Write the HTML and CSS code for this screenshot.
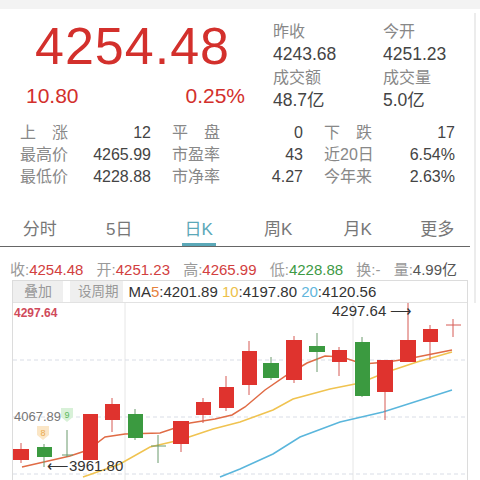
FILE: index.html
```html
<!DOCTYPE html>
<html lang="zh-CN">
<head>
    <meta charset="UTF-8">
    <meta name="viewport" content="width=device-width, initial-scale=1.0">
    <title>上证指数</title>
    <link rel="stylesheet" href="styles.css">
</head>
<body>
    <div class="screen">
        <div class="topbar"></div>
        <div class="edge"></div>

        <!-- quote header -->
        <div class="quote">
            <div class="price-box">
                <div class="price">4254.48</div>
                <div class="change">
                    <span>10.80</span>
                    <span>0.25%</span>
                </div>
            </div>
            <div class="brief">
                <div class="brief-item"><div class="lbl">昨收</div><div class="val">4243.68</div></div>
                <div class="brief-item"><div class="lbl">今开</div><div class="val">4251.23</div></div>
                <div class="brief-item"><div class="lbl">成交额</div><div class="val">48.7亿</div></div>
                <div class="brief-item"><div class="lbl">成交量</div><div class="val">5.0亿</div></div>
            </div>
        </div>

        <!-- stats -->
        <div class="stats">
            <div class="stat"><span>上　涨</span><b>12</b></div>
            <div class="stat"><span>平　盘</span><b>0</b></div>
            <div class="stat"><span>下　跌</span><b>17</b></div>
            <div class="stat"><span>最高价</span><b>4265.99</b></div>
            <div class="stat"><span>市盈率</span><b>43</b></div>
            <div class="stat"><span>近20日</span><b>6.54%</b></div>
            <div class="stat"><span>最低价</span><b>4228.88</b></div>
            <div class="stat"><span>市净率</span><b>4.27</b></div>
            <div class="stat"><span>今年来</span><b>2.63%</b></div>
        </div>

        <!-- tabs -->
        <div class="tabs">
            <div class="tab">分时</div>
            <div class="tab">5日</div>
            <div class="tab active">日K</div>
            <div class="tab">周K</div>
            <div class="tab">月K</div>
            <div class="tab">更多</div>
        </div>

        <div class="ohlc">
            <span>收:<em class="up">4254.48</em></span>
            <span>开:<em class="up">4251.23</em></span>
            <span>高:<em class="up">4265.99</em></span>
            <span>低:<em class="down">4228.88</em></span>
            <span>换:-</span>
            <span>量:<em>4.99亿</em></span>
        </div>

        <!-- k-line chart -->
        <div class="chart">
            <div class="chart-head">
                <span class="btn">叠加</span>
                <span class="btn btn-period">设周期</span>
                <span class="ma">MA<i class="c5">5</i>:4201.89 <i class="c10">10</i>:4197.80 <i class="c20">20</i>:4120.56</span>
            </div>
            <svg class="plot" width="454" height="180" viewBox="13 306 454 180">
                <g class="grid">
                    <line x1="125" y1="306" x2="125" y2="490"/>
                    <line x1="353" y1="306" x2="353" y2="490"/>
                    <line class="dash" x1="13" y1="363" x2="467" y2="363"/>
                    <line class="dash" x1="13" y1="420" x2="467" y2="420"/>
                    <line class="dash" x1="13" y1="477" x2="467" y2="477"/>
                </g>

                <polyline class="ma20" points="220,480 240,472 273,457 300,440 340,425 383,415 452,393"/>
                <polyline class="ma10" points="83,480 120,467 150,450 180,443 213,432 240,425 273,413 293,402 330,392 360,386 387,375 417,365 452,355"/>
                <polyline class="ma5" points="22,470 70,459 88,453 105,440 125,437 160,436 190,426 215,422 232,418 245,410 265,393 287,378 307,366 325,359 342,360 363,367 387,365 407,362 452,353"/>

                <g class="up">
                    <line x1="21" y1="446" x2="21" y2="466"/><rect x="13" y="452" width="16" height="11"/>
                    <line x1="90" y1="417" x2="90" y2="463"/><rect x="83" y="417" width="15" height="46"/>
                    <line x1="112" y1="401" x2="112" y2="435"/><rect x="105" y="407" width="15" height="16"/>
                    <line x1="181" y1="424" x2="181" y2="455"/><rect x="173" y="424" width="16" height="23"/>
                    <line x1="203" y1="401" x2="203" y2="426"/><rect x="196" y="405" width="15" height="13"/>
                    <line x1="226" y1="379" x2="226" y2="414"/><rect x="219" y="390" width="15" height="21"/>
                    <line x1="249" y1="344" x2="249" y2="398"/><rect x="242" y="354" width="15" height="34"/>
                    <line x1="294" y1="339" x2="294" y2="386"/><rect x="286" y="343" width="16" height="40"/>
                    <line x1="339" y1="350" x2="339" y2="379"/><rect x="332" y="353" width="15" height="12"/>
                    <line x1="385" y1="363" x2="385" y2="423"/><rect x="377" y="363" width="16" height="32"/>
                    <line x1="408" y1="306" x2="408" y2="365"/><rect x="400" y="343" width="16" height="22"/>
                    <line x1="430" y1="328" x2="430" y2="363"/><rect x="423" y="332" width="15" height="13"/>
                    <line x1="453" y1="322" x2="453" y2="340"/><line x1="446" y1="328" x2="461" y2="328"/>
                </g>
                <g class="down">
                    <line x1="44" y1="447" x2="44" y2="470"/><rect x="37" y="450" width="15" height="10"/>
                    <line x1="67" y1="433" x2="67" y2="460"/><line x1="62" y1="458" x2="73" y2="458"/>
                    <line x1="135" y1="412" x2="135" y2="443"/><rect x="128" y="417" width="15" height="24"/>
                    <line x1="158" y1="438" x2="158" y2="466"/><line x1="151" y1="449" x2="166" y2="449"/>
                    <line x1="271" y1="360" x2="271" y2="383"/><rect x="263" y="366" width="16" height="15"/>
                    <line x1="317" y1="336" x2="317" y2="375"/><rect x="309" y="349" width="16" height="6"/>
                    <line x1="362" y1="340" x2="362" y2="400"/><rect x="355" y="345" width="15" height="54"/>
                </g>

                <path class="badge8" d="M37 429 h12 v9 l-6 5 l-6 -5 z"/>
                <text class="badge-t8" x="43" y="439">8</text>
                <path class="badge9" d="M61 411 h12 v9 l-6 5 l-6 -5 z"/>
                <text class="badge-t9" x="67" y="421">9</text>

                <text class="hi-axis" x="14" y="320">4297.64</text>
                <text class="mid-axis" x="14" y="424">4067.89</text>
                <text class="mark" x="332" y="319">4297.64 ⟶</text>
                <text class="mark" x="47" y="474">⟵3961.80</text>
            </svg>
        </div>
    </div>
</body>
</html>
```

FILE: styles.css
```css
body {
    margin: 0;
    background: #fff;
    font-family: "Liberation Sans", "Noto Sans CJK SC", sans-serif;
    color: #444;
}
.screen {
    position: relative;
    width: 480px;
    height: 480px;
    overflow: hidden;
}
.topbar {
    height: 9px;
    background: #f3f3f3;
}
.edge {
    position: absolute;
    left: 474px;
    top: 13px;
    width: 2px;
    height: 290px;
    background: #ececec;
}

/* header */
.quote {
    display: flex;
    padding-top: 11px;
}
.price-box {
    width: 247px;
    padding-left: 26px;
}
.price {
    margin-left: 9px;
    font-size: 52px;
    line-height: 52px;
    letter-spacing: 1px;
    color: #d3302c;
}
.change {
    display: flex;
    justify-content: space-between;
    margin-top: 13px;
    width: 219px;
    font-size: 21px;
    line-height: 21px;
    color: #d3302c;
}
.brief {
    display: grid;
    grid-template-columns: 110px 90px;
}
.brief-item .lbl {
    font-size: 16px;
    line-height: 23px;
    color: #888;
}
.brief-item .val {
    font-size: 17.5px;
    line-height: 23px;
    color: #444;
}

/* stats */
.stats {
    display: grid;
    grid-template-columns: repeat(3, 131px);
    column-gap: 21px;
    padding: 10px 0 0 20px;
    font-size: 16px;
    line-height: 22px;
}
.stat {
    display: flex;
    justify-content: space-between;
}
.stat span {
    color: #888;
}
.stat b {
    font-weight: normal;
    color: #444;
}

/* tabs */
.tabs {
    display: grid;
    grid-template-columns: repeat(6, 79.5px);
    margin-top: 31px;
    width: 470px;
    border-bottom: 1px solid #666;
    font-size: 17px;
    color: #777;
}
.tab {
    text-align: center;
    padding-bottom: 5px;
    line-height: 22px;
}
.tab.active {
    color: #5ba8b8;
    justify-self: center;
    width: 34px;
    border-bottom: 3px solid #5ba8b8;
    padding-bottom: 2px;
}

.ohlc {
    width: 462px;
    padding: 13px 0 0 10px;
    white-space: nowrap;
    overflow: hidden;
    font-size: 15px;
    line-height: 20px;
    color: #999;
}
.ohlc span {
    margin-right: 9px;
}
.ohlc em {
    font-style: normal;
    color: #555;
}
.ohlc em.up {
    color: #d24040;
}
.ohlc em.down {
    color: #3d9a45;
}

/* chart */
.chart {
    margin: 0 0 0 12px;
    width: 454px;
    border: 1px solid #dcdcdc;
}
.chart-head {
    display: flex;
    align-items: stretch;
    height: 21px;
    border-bottom: 1px solid #e2e2e2;
    font-size: 15px;
}
.btn {
    padding: 0 11px;
    background: #efefef;
    color: #999;
    line-height: 21px;
    font-size: 14px;
}
.btn-period {
    margin-left: 7px;
    padding: 0 4px 0 8px;
    font-size: 13.5px;
}
.ma {
    margin-left: 6px;
    line-height: 21px;
    color: #333;
}
.ma i {
    font-style: normal;
}
.ma .c5 { color: #e5823d; }
.ma .c10 { color: #ecc04a; }
.ma .c20 { color: #62b6dc; }

.plot {
    display: block;
}
.grid line {
    stroke: #e6e6e6;
    stroke-width: 1;
}
.grid line.dash {
    stroke: #d9dde6;
    stroke-dasharray: 4 3;
}
.ma5, .ma10, .ma20 {
    fill: none;
    stroke-width: 1.5;
}
.ma5 { stroke: #e06b45; }
.ma10 { stroke: #f0c350; }
.ma20 { stroke: #5ab6dc; }
.up rect { fill: #df332e; }
.up line { stroke: #d65a55; stroke-width: 1; }
.down rect { fill: #3b9a40; }
.down line { stroke: #6a9a6c; stroke-width: 1; }
.badge8 { fill: #fbe6c6; }
.badge9 { fill: #d8f1d8; }
.badge-t8, .badge-t9 {
    font-size: 9px;
    text-anchor: middle;
}
.badge-t8 { fill: #e9a94e; }
.badge-t9 { fill: #5cb85c; }
.hi-axis {
    font-size: 12px;
    font-weight: bold;
    fill: #d04a5a;
}
.mid-axis {
    font-size: 13px;
    fill: #777;
}
.mark {
    font-size: 15px;
    fill: #333;
}
```
